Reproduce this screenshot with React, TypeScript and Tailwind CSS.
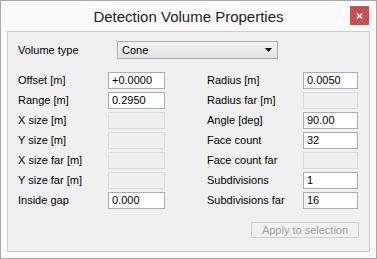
import React from 'react';

type Field = { label: string; value?: string; disabled?: boolean };

const leftFields: Field[] = [
  { label: 'Offset [m]', value: '+0.0000' },
  { label: 'Range [m]', value: '0.2950' },
  { label: 'X size [m]', disabled: true },
  { label: 'Y size [m]', disabled: true },
  { label: 'X size far [m]', disabled: true },
  { label: 'Y size far [m]', disabled: true },
  { label: 'Inside gap', value: '0.000' },
];

const rightFields: Field[] = [
  { label: 'Radius [m]', value: '0.0050' },
  { label: 'Radius far [m]', disabled: true },
  { label: 'Angle [deg]', value: '90.00' },
  { label: 'Face count', value: '32' },
  { label: 'Face count far', disabled: true },
  { label: 'Subdivisions', value: '1' },
  { label: 'Subdivisions far', value: '16' },
];

const FieldRow: React.FC<{ field: Field; labelW: string; inputW: string }> = ({ field, labelW, inputW }) => (
  <div className="flex items-center h-[17px]">
    <span className={`${labelW} shrink-0 leading-none`}>{field.label}</span>
    <div
      className={`${inputW} h-[17px] flex items-center px-[3px] border ${
        field.disabled ? 'border-[#d9d9d9] bg-[#efefef]' : 'border-[#abadb3] bg-white'
      }`}
    >
      {field.value}
    </div>
  </div>
);

export default function App() {
  return (
    <div
      className="w-[377px] h-[259px] border border-[#a9a9a9] bg-[#fafafa] flex flex-col px-[6px] pb-[6px] text-[11px] text-black"
      style={{ fontFamily: '"Liberation Sans", Arial, sans-serif' }}
    >
      {/* Title bar */}
      <div className="h-[30px] grid grid-cols-[1fr_auto_1fr] items-start">
        <div />
        <div className="text-[15px] leading-none mt-[8px] text-[#1e1e1e]">Detection Volume Properties</div>
        <div className="justify-self-end mt-[5px] mr-[1px] w-[19px] h-[19px] bg-[#c75050] flex items-center justify-center">
          <svg width="7" height="6" viewBox="0 0 7 6">
            <path d="M0.8 0.5 L6.2 5.5 M6.2 0.5 L0.8 5.5" stroke="white" strokeWidth="1.6" />
          </svg>
        </div>
      </div>

      {/* Content panel */}
      <div className="flex-1 border border-[#cccccc] bg-[#f0f0f0] flex flex-col pl-[10px] pr-[10px] pt-[9px]">
        <div className="flex items-center h-[18px]">
          <span className="w-[99px] shrink-0">Volume type</span>
          <div className="w-[161px] h-[18px] border border-[#acacac] bg-gradient-to-b from-[#f2f2f2] to-[#e3e3e3] flex items-center justify-between pl-[4px] pr-[5px]">
            <span>Cone</span>
            <svg width="7" height="4" viewBox="0 0 7 4">
              <polygon points="0,0 7,0 3.5,4" fill="black" />
            </svg>
          </div>
        </div>

        <div className="flex mt-[13px] gap-[42px]">
          <div className="flex flex-col gap-[3px]">
            {leftFields.map((f) => (
              <FieldRow key={f.label} field={f} labelW="w-[90px]" inputW="w-[57px]" />
            ))}
          </div>
          <div className="flex flex-col gap-[3px]">
            {rightFields.map((f) => (
              <FieldRow key={f.label} field={f} labelW="w-[96px]" inputW="w-[55px]" />
            ))}
          </div>
        </div>

        <div className="self-end mt-[13px] w-[108px] h-[16px] border border-[#cfcfcf] bg-[#f0f0f0] flex items-center justify-center text-[#a0a0a0]">
          Apply to selection
        </div>
      </div>
    </div>
  );
}
